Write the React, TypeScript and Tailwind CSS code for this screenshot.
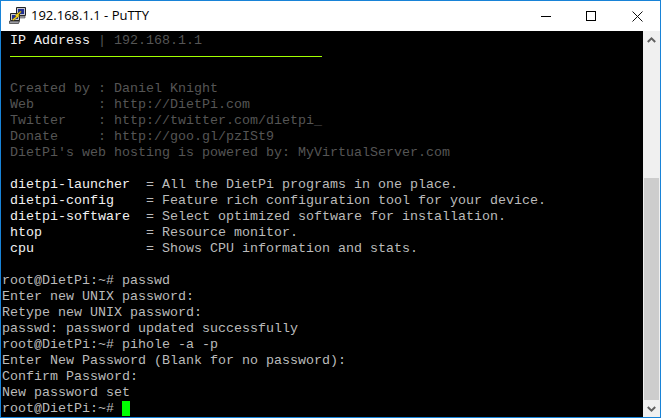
const G = "text-[#555555]";
const W = "text-[#bbbbbb]";
const B = "text-[#f2f2f2]";

type Line = { t?: string; c?: string; k?: string; rest?: string };

const top: Line[] = [
  { t: " Created by : Daniel Knight", c: G },
  { t: " Web        : http://DietPi.com", c: G },
  { t: " Twitter    : http://twitter.com/dietpi_", c: G },
  { t: " Donate     : http://goo.gl/pzISt9", c: G },
  { t: " DietPi's web hosting is powered by: MyVirtualServer.com", c: G },
  {},
  { k: " dietpi-launcher", rest: "  = All the DietPi programs in one place." },
  { k: " dietpi-config", rest: "    = Feature rich configuration tool for your device." },
  { k: " dietpi-software", rest: "  = Select optimized software for installation." },
  { k: " htop", rest: "             = Resource monitor." },
  { k: " cpu", rest: "              = Shows CPU information and stats." },
  {},
  { t: "root@DietPi:~# passwd" },
  { t: "Enter new UNIX password:" },
  { t: "Retype new UNIX password:" },
  { t: "passwd: password updated successfully" },
  { t: "root@DietPi:~# pihole -a -p" },
  { t: "Enter New Password (Blank for no password):" },
  { t: "Confirm Password:" },
  { t: "New password set" },
];

function Row({ l }: { l: Line }) {
  return (
    <div className="h-4 whitespace-pre">
      {l.k ? <span className={B}>{l.k}</span> : null}
      {l.rest ? <span className={W}>{l.rest}</span> : null}
      {l.t ? <span className={l.c ?? W}>{l.t}</span> : null}
    </div>
  );
}

function PuttyIcon() {
  return (
    <svg width="18" height="18" viewBox="0 0 18 18" className="shrink-0">
      <path d="M7.5 0.5h9v8h-9z" fill="#c4c4cc" stroke="#222" />
      <rect x="9" y="2" width="6" height="5" fill="#1f2f96" />
      <path d="M8 9h8v2H8z" fill="#a8a8b0" stroke="#444" strokeWidth="0.6" />
      <path d="M1.5 6.5h9v7h-9z" fill="#c4c4cc" stroke="#222" />
      <rect x="3" y="8" width="6" height="4" fill="#1f2f96" />
      <path d="M0.5 14h10l-1 2.5H0.5z" fill="#9a9aa2" stroke="#333" strokeWidth="0.7" />
      <path d="M3 12.5l4-3-1-1 5.5-4.5 1 .8L9.5 8l1 1-6 4.5z" fill="#f2d21c" stroke="#5c4f00" strokeWidth="0.5" />
    </svg>
  );
}

export default function App() {
  return (
    <div className="w-[661px] h-[418px] flex flex-col bg-[#1883d7] p-px overflow-hidden">
      <div className="h-[30px] shrink-0 bg-white flex items-center text-black">
        <div className="pl-[8px] pr-[4px] flex items-center">
          <PuttyIcon />
        </div>
        <span className="text-[13px] font-['Open_Sans',sans-serif] flex-1">192.168.1.1 - PuTTY</span>
        <div className="w-[45px] h-[30px] flex items-center justify-center">
          <div className="w-[10px] h-px bg-black" />
        </div>
        <div className="w-[46px] h-[30px] flex items-center justify-center">
          <div className="w-[10px] h-[10px] border border-black" />
        </div>
        <div className="w-[46px] h-[30px] flex items-center justify-center">
          <svg width="11" height="11" viewBox="0 0 11 11">
            <path d="M0.5 0.5l10 10M10.5 0.5l-10 10" stroke="#111" strokeWidth="1" fill="none" />
          </svg>
        </div>
      </div>
      <div className="flex-1 flex min-h-0">
        <div className="flex-1 bg-black pl-px pt-[2px] font-['Liberation_Mono',monospace] text-[13.33px] leading-4 overflow-hidden">
          <div className="h-4 whitespace-pre">
            <span className={B}> IP Address</span>
            <span className={G}> | 192.168.1.1</span>
          </div>
          <div className="h-4 pt-[7px] pl-2">
            <div className="w-[312px] h-px bg-[#a0ff00]" />
          </div>
          <div className="h-4" />
          {top.map((l, i) => (
            <Row key={i} l={l} />
          ))}
          <div className="h-4 whitespace-pre flex">
            <span className={W}>root@DietPi:~# </span>
            <span className="w-2 h-[15px] bg-[#00ff00]" />
          </div>
        </div>
        <div className="w-[17px] shrink-0 bg-[#f0f0f0] flex flex-col">
          <div className="h-[147px] flex justify-center pt-[6px]">
            <svg width="9" height="6" viewBox="0 0 9 6">
              <path d="M0.8 5L4.5 1.4L8.2 5" stroke="#606060" strokeWidth="2" fill="none" />
            </svg>
          </div>
          <div className="flex-1 bg-[#cdcdcd] mx-px" />
          <div className="h-[17px] flex items-center justify-center">
            <svg width="9" height="6" viewBox="0 0 9 6">
              <path d="M0.8 1L4.5 4.6L8.2 1" stroke="#606060" strokeWidth="2" fill="none" />
            </svg>
          </div>
        </div>
      </div>
    </div>
  );
}
